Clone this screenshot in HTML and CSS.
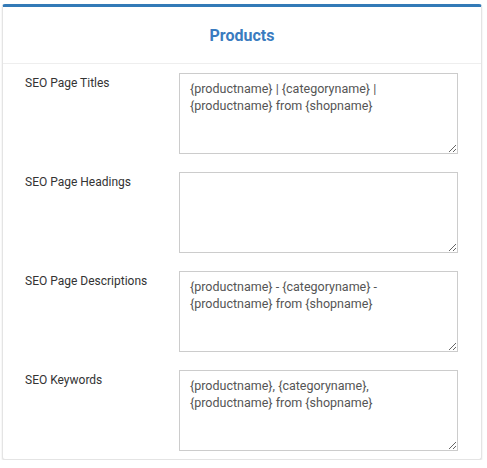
FILE: index.html
```html
<!DOCTYPE html>
<html>
<head>
<meta charset="utf-8">
<link rel="stylesheet" href="styles.css">
</head>
<body>
<div class="card">
  <div class="card-header">Products</div>
  <div class="card-body">
    <div class="row">
      <label class="label">SEO Page Titles</label>
      <textarea class="field">{productname} | {categoryname} | {productname} from {shopname}</textarea>
    </div>
    <div class="row">
      <label class="label">SEO Page Headings</label>
      <textarea class="field"></textarea>
    </div>
    <div class="row">
      <label class="label">SEO Page Descriptions</label>
      <textarea class="field">{productname} - {categoryname} - {productname} from {shopname}</textarea>
    </div>
    <div class="row">
      <label class="label">SEO Keywords</label>
      <textarea class="field">{productname}, {categoryname}, {productname} from {shopname}</textarea>
    </div>
  </div>
</div>
</body>
</html>
```

FILE: styles.css
```css
html, body {
  margin: 0;
  padding: 0;
  background: #fff;
  font-family: Roboto, "Liberation Sans", sans-serif;
}
.card {
  margin: 4px 5px 0 2px;
  width: 480px;
  box-sizing: border-box;
  border: 1px solid #e4e4e4;
  border-top: 3px solid #337ab7;
  border-radius: 3px;
  background: #fff;
  box-shadow: 0 1px 2px rgba(0,0,0,0.12);
}
.card-header {
  height: 57px;
  box-sizing: border-box;
  border-bottom: 1px solid #eeeeee;
  display: flex;
  align-items: center;
  justify-content: center;
  font-size: 16px;
  font-weight: 700;
  color: #3a7bbf;
  padding-top: 1px;
}
.card-body {
  padding: 9px 0 8px 22px;
  display: flex;
  flex-direction: column;
  gap: 18px;
}
.row {
  display: flex;
  align-items: flex-start;
}
.label {
  width: 154px;
  font-size: 12px;
  color: #333;
  padding-top: 2px;
  line-height: 16px;
}
.field {
  width: 279px;
  height: 81px;
  box-sizing: border-box;
  border: 1px solid #cccccc;
  border-radius: 0;
  padding: 6px 10px;
  font-family: Roboto, "Liberation Sans", sans-serif;
  font-size: 12.5px;
  line-height: 17px;
  color: #555;
  margin: 0;
  resize: vertical;
  outline: none;
}
```
